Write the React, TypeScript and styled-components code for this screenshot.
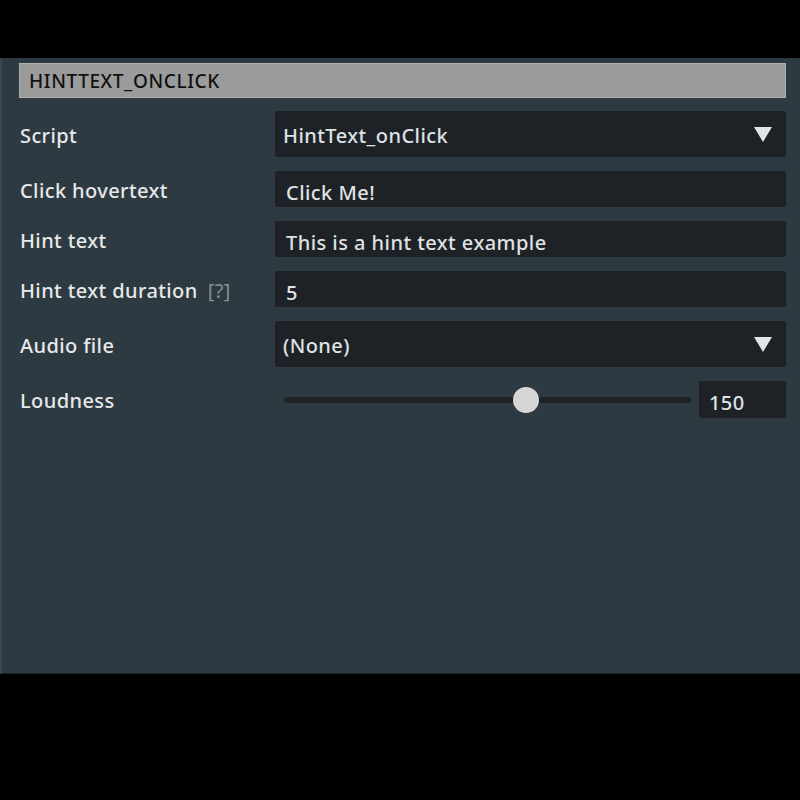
import React from "react";
import styled, { createGlobalStyle } from "styled-components";

const GlobalStyle = createGlobalStyle`
  html, body {
    margin: 0;
    padding: 0;
    background: #000;
  }
  body {
    font-family: "Noto Sans", "Open Sans", sans-serif;
  }
`;

const Panel = styled.div`
  margin-top: 58px;
  height: 616px;
  box-sizing: border-box;
  background: #2e3a41;
  border-left: 2px solid #3a464d;
  border-bottom: 1px solid #1b2226;
  padding: 5px 14px 0 17px;
`;

const Header = styled.div`
  height: 35px;
  box-sizing: border-box;
  background: #9b9b9b;
  border: 1px solid #b0b0b0;
  display: flex;
  align-items: center;
  padding-left: 9px;
  font-size: 19px;
  font-weight: 500;
  color: #111;
  letter-spacing: 0.6px;
`;

const Form = styled.div`
  margin-top: 13px;
  display: grid;
  grid-template-columns: 256px 1fr;
  row-gap: 14px;
`;

const Label = styled.div`
  display: flex;
  align-items: center;
  padding: 2px 0 0 1px;
  font-size: 20px;
  font-weight: 500;
  letter-spacing: 0.4px;
  color: #e6e8e9;
`;

const Help = styled.span`
  color: #8a9094;
  margin-left: 10px;
  font-weight: 400;
`;

const Field = styled.div<{ $tall?: boolean }>`
  height: ${(p) => (p.$tall ? 46 : 36)}px;
  box-sizing: border-box;
  background: #1e2226;
  border-radius: 2px;
  display: flex;
  align-items: center;
  justify-content: space-between;
  padding: ${(p) => (p.$tall ? "2px 14px 0 8px" : "6px 10px 0 11px")};
  font-size: 20px;
  font-weight: 500;
  letter-spacing: 0.45px;
  color: #dfe2e4;
`;

const Arrow = styled.span`
  width: 0;
  height: 0;
  margin-top: -2px;
  border-left: 9px solid transparent;
  border-right: 9px solid transparent;
  border-top: 15px solid #e2e4e6;
`;

const SliderRow = styled.div`
  height: 37px;
  display: flex;
  align-items: center;
  gap: 8px;
  padding-left: 9px;
`;

const Track = styled.div`
  flex: 1;
  height: 6px;
  border-radius: 3px;
  background: #1e2226;
  position: relative;
`;

const Thumb = styled.div`
  position: absolute;
  top: 50%;
  width: 26px;
  height: 26px;
  border-radius: 50%;
  background: #d6d6d6;
  transform: translate(-50%, -50%);
`;

const NumberBox = styled.div`
  width: 87px;
  height: 37px;
  box-sizing: border-box;
  background: #1e2226;
  border-radius: 2px;
  display: flex;
  align-items: center;
  padding: 6px 0 0 10px;
  font-size: 20px;
  font-weight: 500;
  letter-spacing: 0.4px;
  color: #dfe2e4;
`;

const loudness = 150;
const loudnessMax = 252;

export default function App() {
  return (
    <>
      <GlobalStyle />
      <Panel>
        <Header>HINTTEXT_ONCLICK</Header>
        <Form>
          <Label>Script</Label>
          <Field $tall>
            HintText_onClick
            <Arrow />
          </Field>

          <Label>Click hovertext</Label>
          <Field>Click Me!</Field>

          <Label>Hint text</Label>
          <Field>This is a hint text example</Field>

          <Label>
            Hint text duration<Help>[?]</Help>
          </Label>
          <Field>5</Field>

          <Label>Audio file</Label>
          <Field $tall>
            (None)
            <Arrow />
          </Field>

          <Label>Loudness</Label>
          <SliderRow>
            <Track>
              <Thumb style={{ left: `${(loudness / loudnessMax) * 100}%` }} />
            </Track>
            <NumberBox>{loudness}</NumberBox>
          </SliderRow>
        </Form>
      </Panel>
    </>
  );
}
